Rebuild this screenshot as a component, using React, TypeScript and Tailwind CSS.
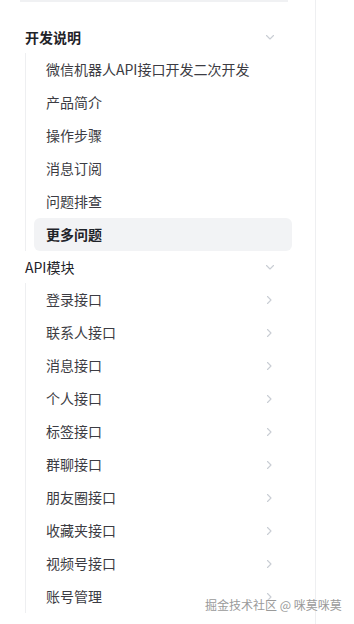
import React from "react";

const font = { fontFamily: '"Noto Sans CJK SC", "Noto Sans", sans-serif' };

function ChevronDown() {
  return (
    <svg width="12" height="12" viewBox="0 0 12 12" fill="none" className="shrink-0">
      <path d="M2.5 4.5 L6 8 L9.5 4.5" stroke="#c9cdd4" strokeWidth="1.1" strokeLinecap="round" strokeLinejoin="round" />
    </svg>
  );
}

function ChevronRight() {
  return (
    <svg width="12" height="12" viewBox="0 0 12 12" fill="none" className="shrink-0">
      <path d="M4.5 2.5 L8 6 L4.5 9.5" stroke="#c9cdd4" strokeWidth="1.1" strokeLinecap="round" strokeLinejoin="round" />
    </svg>
  );
}

const intro = ["微信机器人API接口开发二次开发", "产品简介", "操作步骤", "消息订阅", "问题排查", "更多问题"];
const api = [
  "登录接口",
  "联系人接口",
  "消息接口",
  "个人接口",
  "标签接口",
  "群聊接口",
  "朋友圈接口",
  "收藏夹接口",
  "视频号接口",
  "账号管理",
];

export default function App() {
  return (
    <div className="relative w-[354px] h-[624px] bg-white overflow-hidden flex" style={font}>
      <div className="w-[316px] h-full border-r border-[#eeeff1] flex flex-col">
        <div className="ml-[20px] w-[268px] h-[2px] bg-[#f0f1f3]" />
        <div className="mt-[19px] h-[32px] pl-[25px] pr-[39px] flex items-center justify-between">
          <span className="text-[14px] font-bold text-[#1f2329]">开发说明</span>
          <ChevronDown />
        </div>
        <div className="ml-[25px] border-l border-[#eeeff1] pl-[8px] pr-[23px]">
          {intro.map((t) => {
            const active = t === "更多问题";
            return (
              <div
                key={t}
                className={
                  active
                    ? "h-[33px] flex items-center px-[12px] rounded-[6px] bg-[#f2f3f5] text-[14px] font-bold text-[#1f2329]"
                    : "h-[33px] flex items-center px-[12px] text-[14px] text-[#3c3c43]"
                }
              >
                {t}
              </div>
            );
          })}
        </div>
        <div className="h-[32px] pl-[25px] pr-[39px] flex items-center justify-between">
          <span className="text-[14px] text-[#1f2329]">API模块</span>
          <ChevronDown />
        </div>
        <div className="ml-[25px] border-l border-[#eeeff1] pl-[8px] pr-[23px]">
          {api.map((t) => (
            <div key={t} className="h-[33px] flex items-center justify-between pl-[12px] pr-[17px] text-[14px] text-[#3c3c43]">
              <span>{t}</span>
              <ChevronRight />
            </div>
          ))}
        </div>
      </div>
      <div
        className="absolute left-[205px] top-[596px] text-[12px] leading-[18px] text-[#9a9a9a] whitespace-nowrap"
        style={{ textShadow: "0 0 1px #ffffff, 0 0 1px #ffffff" }}
      >
        掘金技术社区 @ 咪莫咪莫
      </div>
    </div>
  );
}
